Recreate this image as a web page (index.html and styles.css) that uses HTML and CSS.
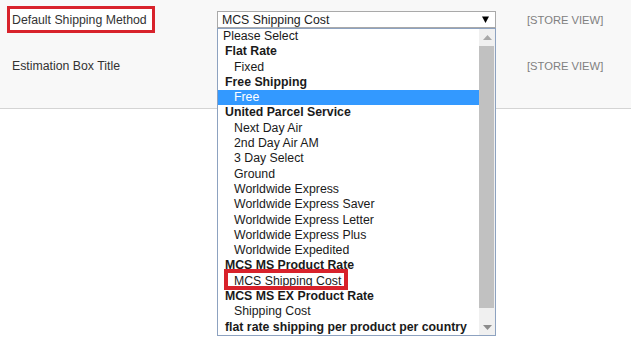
FILE: index.html
```html
<!DOCTYPE html>
<html>
<head>
<meta charset="utf-8">
<title>Shipping configuration</title>
<link rel="stylesheet" href="styles.css">
</head>
<body>

<div class="page">
  <div class="config">
    <div class="row first">
      <div class="label"><span class="marked">Default Shipping Method</span></div>
      <div class="value">
        <div class="select">
          <span>MCS Shipping Cost</span>
          <svg class="arrow" width="7" height="7" viewBox="0 0 7 7"><path d="M0 0.5 H7 L3.5 7 Z" fill="#000"/></svg>
        </div>
      </div>
      <div class="scope">[STORE VIEW]</div>
    </div>
    <div class="row second">
      <div class="label plain">Estimation Box Title</div>
      <div class="value"></div>
      <div class="scope">[STORE VIEW]</div>
    </div>
  </div>

  <div class="dropdown">
    <ul class="options">
      <li>Please Select</li>
      <li class="group">Flat Rate</li>
      <li class="item">Fixed</li>
      <li class="group">Free Shipping</li>
      <li class="item active">Free</li>
      <li class="group">United Parcel Service</li>
      <li class="item">Next Day Air</li>
      <li class="item">2nd Day Air AM</li>
      <li class="item">3 Day Select</li>
      <li class="item">Ground</li>
      <li class="item">Worldwide Express</li>
      <li class="item">Worldwide Express Saver</li>
      <li class="item">Worldwide Express Letter</li>
      <li class="item">Worldwide Express Plus</li>
      <li class="item">Worldwide Expedited</li>
      <li class="group">MCS MS Product Rate</li>
      <li class="item">MCS Shipping Cost</li>
      <li class="group">MCS MS EX Product Rate</li>
      <li class="item">Shipping Cost</li>
      <li class="group">flat rate shipping per product per country</li>
    </ul>
    <div class="scrollbar">
      <div class="btn"><svg width="9" height="5" viewBox="0 0 9 5"><path d="M0 5 L4.5 0 L9 5 Z" fill="#a8a8a8"/></svg></div>
      <div class="thumb"></div>
      <div class="btn down"><svg width="9" height="5" viewBox="0 0 9 5"><path d="M0 0 L4.5 5 L9 0 Z" fill="#8c8c8c"/></svg></div>
    </div>
    <span class="callout"></span>
  </div>
</div>

</body>
</html>
```

FILE: styles.css
```css
html, body {
  margin: 0;
  background: #ffffff;
}
body {
  font-family: "Liberation Sans", Arial, sans-serif;
  font-size: 12.3px;
  color: #333333;
}
.page {
  position: relative;
  min-height: 353px;
}
.config {
  background: #f8f8f8;
  height: 108px;
  border-bottom: 1px solid #d4d4d4;
}
.row {
  display: grid;
  grid-template-columns: 217px 279px 1fr;
  grid-template-rows: 17px;
  align-items: center;
}
.first {
  padding-top: 11px;
}
.second {
  margin-top: 29px;
}
.label.plain {
  padding-left: 12px;
}
.marked {
  display: inline-flex;
  align-items: center;
  box-sizing: border-box;
  margin-left: 7px;
  width: 148px;
  height: 27px;
  padding-left: 2px;
  border: 3px solid #d8222b;
  background: #ffffff;
}
.select {
  display: flex;
  align-items: center;
  justify-content: space-between;
  box-sizing: border-box;
  height: 17px;
  padding: 0 6px 0 4px;
  border: 1px solid #a9a9a9;
  background: #ffffff;
  color: #222222;
}
.scope {
  padding-left: 31px;
  color: #808080;
  font-size: 11.2px;
  white-space: nowrap;
}
.dropdown {
  position: absolute;
  left: 217px;
  top: 28px;
  width: 279px;
  height: 308px;
  box-sizing: border-box;
  display: flex;
  border: 1px solid #8da2c0;
  background: #ffffff;
}
.options {
  flex: 1;
  margin: 0;
  padding: 0;
  list-style: none;
  color: #1a1a1a;
}
.options li {
  height: 15.3px;
  line-height: 15.3px;
  padding-left: 5px;
  white-space: nowrap;
}
.options .group {
  font-weight: bold;
  padding-left: 7px;
}
.options .item {
  padding-left: 16px;
}
.options .active {
  background: #3399ff;
  color: #ffffff;
}
.scrollbar {
  width: 16px;
  display: flex;
  flex-direction: column;
  background: #f0f0f0;
}
.btn {
  height: 17px;
  display: flex;
  align-items: center;
  justify-content: center;
}
.btn.down {
  height: 27px;
  align-items: flex-end;
  padding-bottom: 5px;
  box-sizing: border-box;
}
.thumb {
  flex: 1;
  margin: 0 1px 0 0;
  background: #c1c1c1;
}
.callout {
  position: absolute;
  left: 6px;
  top: 240px;
  width: 124px;
  height: 21px;
  box-sizing: border-box;
  border: 4px solid #d8222b;
}
```
